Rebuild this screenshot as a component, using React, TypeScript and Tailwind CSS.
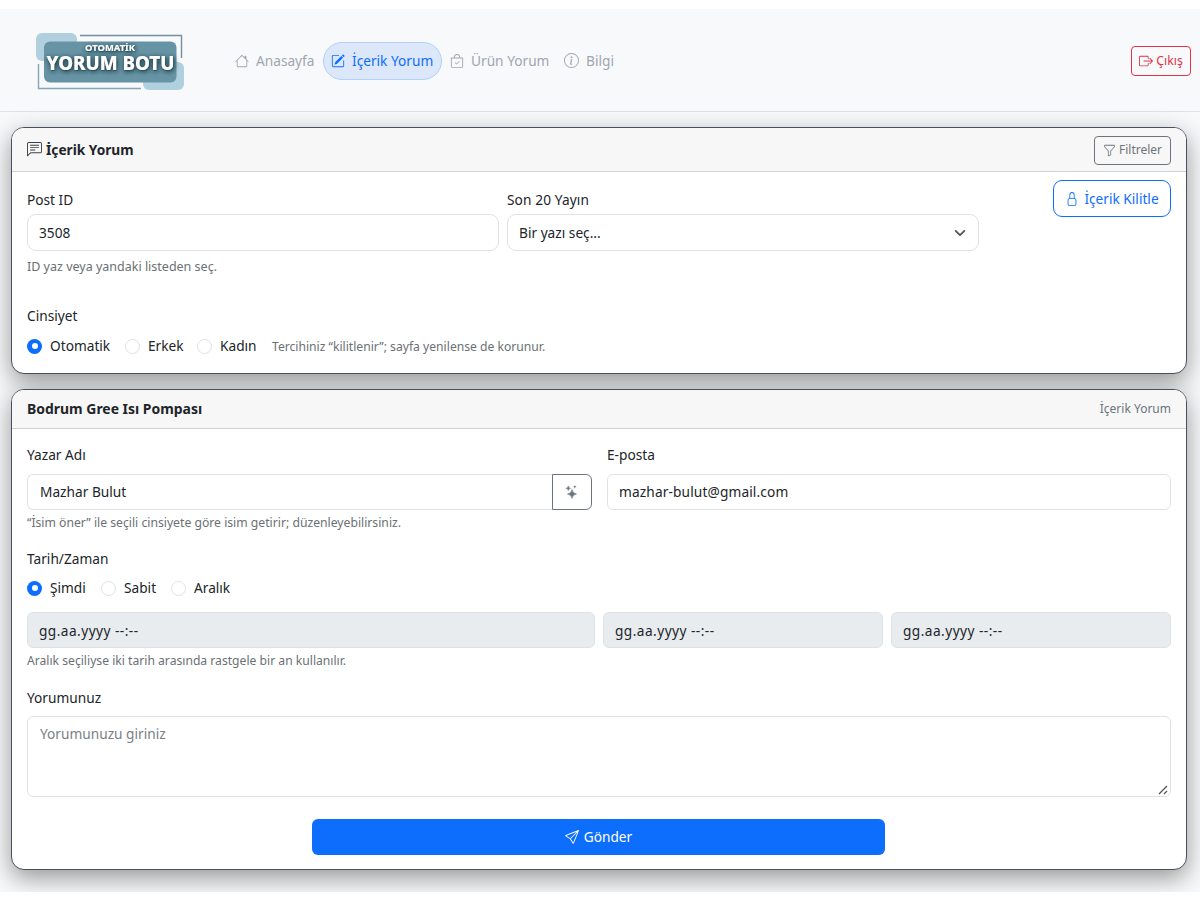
import type { ReactNode } from "react";
import {
  BsHouse,
  BsPencilSquare,
  BsBagCheck,
  BsInfoCircle,
  BsBoxArrowRight,
  BsChatLeftText,
  BsFunnel,
  BsLock,
  BsSend,
} from "react-icons/bs";

function Logo() {
  return (
    <svg width="150" height="60" viewBox="0 0 150 60" className="block shrink-0">
      <defs>
        <filter id="glow" x="-10%" y="-30%" width="120%" height="170%">
          <feDropShadow dx="0.5" dy="1" stdDeviation="2.6" floodColor="#172a32" floodOpacity="0.75" />
          <feDropShadow dx="0.5" dy="0.8" stdDeviation="0.7" floodColor="#172a32" floodOpacity="0.5" />
        </filter>
      </defs>
      <rect x="1" y="2" width="41" height="28" rx="6" fill="#b0cfdf" />
      <rect x="108" y="31" width="41" height="28" rx="6" fill="#b0cfdf" />
      <path d="M45 4.500H146.5V27" fill="none" stroke="#7391a1" strokeWidth="1.4" />
      <path d="M3.500 33V57.500H106" fill="none" stroke="#86a5b5" strokeWidth="1.4" />
      <rect x="9" y="10.500" width="132.500" height="41" rx="6" fill="#6794a5" />
      <g fill="#fff" textAnchor="middle" filter="url(#glow)" fontFamily="'Noto Sans', sans-serif">
        <text x="75" y="19.500" fontSize="9.600" fontWeight="700" textLength="50" lengthAdjust="spacingAndGlyphs">OTOMATİK</text>
        <text x="75.500" y="38.500" fontSize="19.300" fontWeight="800" textLength="128" lengthAdjust="spacingAndGlyphs">YORUM BOTU</text>
      </g>
    </svg>
  );
}

function Sparkles() {
  return (
    <svg width="14" height="14" viewBox="0 0 14 14" fill="currentColor">
      <path d="M7 4.500Q7.500 8.400 11.500 9Q7.500 9.600 7 13.500Q6.500 9.600 2.500 9Q6.500 8.400 7 4.500Z" stroke="currentColor" strokeWidth="0.6" />
      <path d="M3.300 0.800Q3.500 3 5.700 3.300Q3.500 3.600 3.300 5.800Q3 3.600 0.800 3.300Q3 3 3.300 0.800Z" stroke="currentColor" strokeWidth="0.3" />
      <path d="M9.800 0Q10 1.500 11.600 1.800Q10 2 9.800 3.600Q9.600 2 8.100 1.800Q9.600 1.500 9.800 0Z" />
    </svg>
  );
}

function Radio({ label, checked, className }: { label: string; checked?: boolean; className: string }) {
  return (
    <label className={`flex items-center gap-2 ${className}`}>
      <span
        className={
          checked
            ? "flex size-[15px] shrink-0 items-center justify-center rounded-full bg-[#0d6efd]"
            : "size-[15px] shrink-0 rounded-full border border-[#dee2e6] bg-white"
        }
      >
        {checked && <span className="size-[6px] rounded-full bg-white" />}
      </span>
      <span className="whitespace-nowrap">{label}</span>
    </label>
  );
}

function Card({ className, children }: { className: string; children: ReactNode }) {
  return (
    <section
      className={`ml-[11px] w-[1176px] overflow-hidden rounded-[13px] border border-[#475061] bg-white shadow-[0_8px_24px_rgba(0,0,0,0.4)] ${className}`}
    >
      {children}
    </section>
  );
}

function Hint({ className, children }: { className: string; children: ReactNode }) {
  return <p className={`leading-[18px] text-[#6b7075] ${className}`}>{children}</p>;
}

function DateField() {
  return (
    <div className="flex h-9 items-center rounded-[6px] border border-[#dee2e6] bg-[#e9ecef] px-[11px] pt-px tracking-[0.450px]">
      gg.aa.yyyy --:--
    </div>
  );
}

export default function App() {
  return (
    <div className="h-[900px] w-[1200px] overflow-hidden bg-white pt-[9px] font-['Noto_Sans',sans-serif] text-[13.700px] leading-[22px] text-[#212529]">
      <div className="h-[883px] overflow-hidden bg-[#f8f9fa]">
        <header className="flex h-[103px] items-center border-b border-[#dee2e6] pt-[2px] pr-[9px] pl-[35px]">
          <Logo />
          <nav className="ml-[42px] flex items-center text-[#a0a6b1]">
            <a className="flex w-[96px] items-center gap-[7px] pb-px pl-2">
              <BsHouse size={14} />
              Anasayfa
            </a>
            <a className="flex h-[38px] w-[119px] items-center gap-[7px] rounded-full border border-[#b1d0fb] bg-[#dce8fa] pl-[7px] text-[#0d6efd]">
              <BsPencilSquare size={14} />
              İçerik Yorum
            </a>
            <a className="ml-2 flex w-[114px] items-center gap-[7px] pb-px">
              <BsBagCheck size={14} />
              Ürün Yorum
            </a>
            <a className="flex items-center gap-[7px] pb-px">
              <BsInfoCircle size={15} />
              Bilgi
            </a>
          </nav>
          <button className="ml-auto flex h-[30px] w-[60px] items-center justify-center gap-[3px] rounded-[4px] border border-[#dc3545] text-[12.300px] text-[#dc3545]">
            <BsBoxArrowRight size={14} />
            Çıkış
          </button>
        </header>

        <Card className="mt-[15px] h-[247px]">
          <div className="flex h-[44px] items-center border-b border-[#cfd1d3] bg-[#f7f7f7] px-[15px] pt-px">
            <BsChatLeftText size={15} className="mb-px text-[#3c4146]" />
            <h2 className="ml-[4px] font-bold">İçerik Yorum</h2>
            <button className="ml-auto flex h-[29px] w-[77px] items-center justify-center gap-[3px] rounded-[4px] border border-[#6c757d] text-[12px] text-[#6c757d]">
              <BsFunnel size={13} />
              Filtreler
            </button>
          </div>
          <div className="px-[15px] pt-2">
            <div className="flex">
              <div className="w-[472px] pt-[9px]">
                <p>Post ID</p>
                <div className="mt-[3px] flex h-[37px] items-center rounded-[9px] border border-[#dee2e6] px-[11px]">3508</div>
                <Hint className="mt-[7px] text-[12.500px]">ID yaz veya yandaki listeden seç.</Hint>
              </div>
              <div className="ml-2 w-[472px] pt-[9px]">
                <p className="tracking-[0.100px]">Son 20 Yayın</p>
                <div className="mt-[3px] flex h-[37px] items-center justify-between rounded-[9px] border border-[#dee2e6] px-[11px]">
                  Bir yazı seç...
                  <svg width="14" height="14" viewBox="0 0 16 16" fill="none" stroke="#4b5157" strokeWidth="2" strokeLinecap="round" strokeLinejoin="round">
                    <path d="m3 5.500 5 5 5-5" />
                  </svg>
                </div>
              </div>
              <button className="ml-auto flex h-[37px] w-[118px] items-center justify-center gap-[5px] rounded-[9px] border border-[#0d6efd] pt-px text-[#0d6efd]">
                <BsLock size={14} />
                İçerik Kilitle
              </button>
            </div>
            <p className="mt-[29px]">Cinsiyet</p>
            <div className="mt-2 flex items-center">
              <Radio className="w-[98px]" label="Otomatik" checked />
              <Radio className="w-[72px]" label="Erkek" />
              <Radio className="w-[75px]" label="Kadın" />
              <Hint className="pt-px text-[12.150px]">Tercihiniz “kilitlenir”; sayfa yenilense de korunur.</Hint>
            </div>
          </div>
        </Card>

        <Card className="mt-[15px] h-[481px]">
          <div className="flex h-[39px] items-center justify-between border-b border-[#cfd1d3] bg-[#f7f7f7] px-[15px]">
            <h2 className="text-[13.950px] font-bold">Bodrum Gree Isı Pompası</h2>
            <span className="text-[12px] text-[#6c757d]">İçerik Yorum</span>
          </div>
          <div className="px-[15px] pt-[15px]">
            <div className="flex gap-[15px]">
              <div className="w-[565px]">
                <p>Yazar Adı</p>
                <div className="mt-[8px] flex">
                  <div className="flex h-9 w-[525px] items-center rounded-l-[6px] border border-r-0 border-[#dee2e6] px-[12px]">Mazhar Bulut</div>
                  <button className="flex h-9 w-10 items-center justify-center rounded-r-[6px] border border-[#6c757d] text-[#6c757d]">
                    <Sparkles />
                  </button>
                </div>
                <Hint className="mt-[4px] text-[12.200px]">“İsim öner” ile seçili cinsiyete göre isim getirir; düzenleyebilirsiniz.</Hint>
              </div>
              <div className="w-[565px]">
                <p>E-posta</p>
                <div className="mt-[8px] flex h-9 items-center rounded-[6px] border border-[#dee2e6] px-[11px] tracking-[0.130px]">mazhar-bulut@gmail.com</div>
              </div>
            </div>
            <p className="mt-[16px]">Tarih/Zaman</p>
            <div className="mt-[7px] flex items-center">
              <Radio className="w-[74px]" label="Şimdi" checked />
              <Radio className="w-[70px]" label="Sabit" />
              <Radio className="w-[70px]" label="Aralık" />
            </div>
            <div className="mt-[13px] grid grid-cols-[568px_280px_280px] gap-2">
              <DateField />
              <DateField />
              <DateField />
            </div>
            <Hint className="mt-[4px] text-[12.150px]">Aralık seçiliyse iki tarih arasında rastgele bir an kullanılır.</Hint>
            <p className="mt-[17px]">Yorumunuz</p>
            <div className="mt-[7px] flex h-[81px] items-start justify-between rounded-[6px] border border-[#dee2e6] pt-[6px] pr-[2px] pl-[12px] text-[#7a7f84]">
              Yorumunuzu giriniz
              <svg width="10" height="10" viewBox="0 0 10 10" className="mb-px self-end" stroke="#555" strokeWidth="1.300">
                <path d="M1 9 9 1M6 9 9 6" />
              </svg>
            </div>
            <button className="ml-[285px] mt-[22px] flex h-9 w-[573px] items-center justify-center gap-[5px] rounded-[6px] bg-[#0d6efd] text-white">
              <BsSend size={14} />
              Gönder
            </button>
          </div>
        </Card>
      </div>
    </div>
  );
}
